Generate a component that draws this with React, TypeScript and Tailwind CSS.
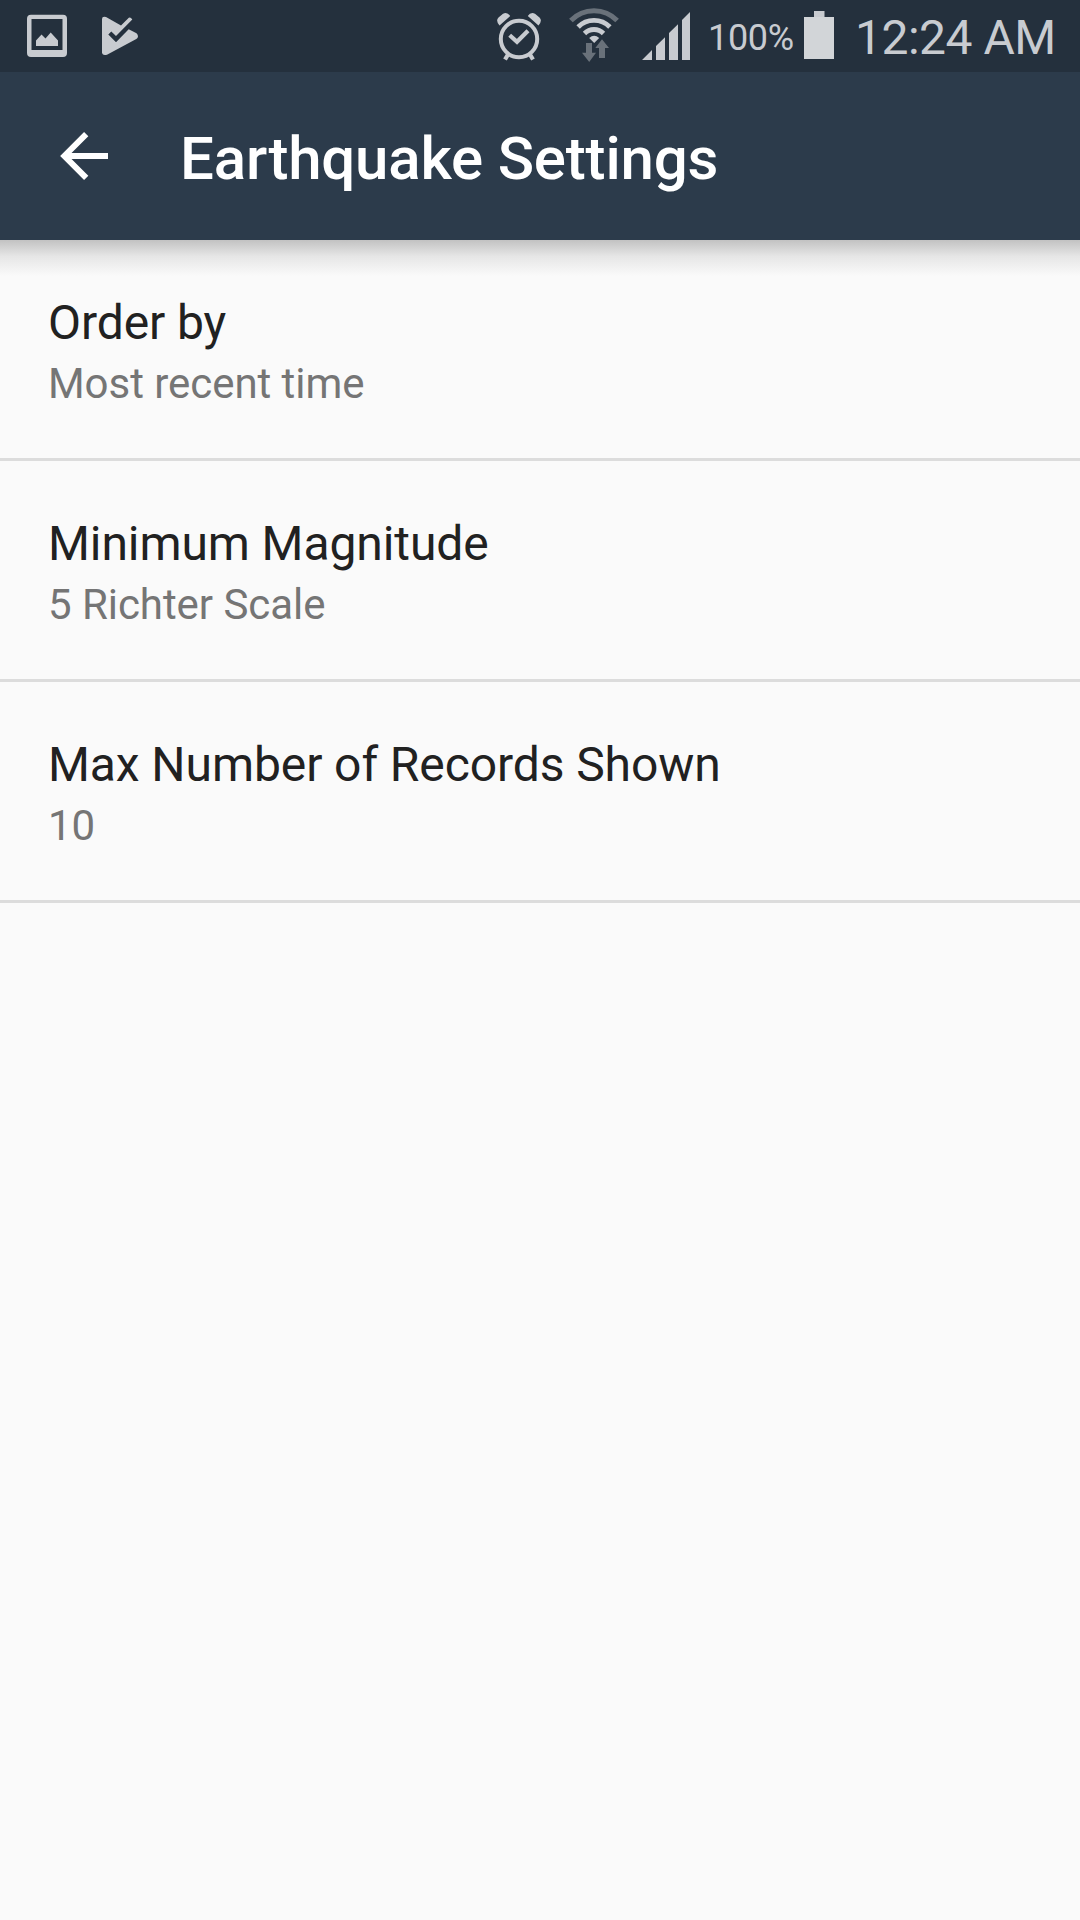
const settings = [
  { title: "Order by", summary: "Most recent time" },
  { title: "Minimum Magnitude", summary: "5 Richter Scale" },
  { title: "Max Number of Records Shown", summary: "10" },
];

function PictureIcon() {
  return (
    <svg className="ml-[27px] h-[72px] w-[40px] shrink-0" viewBox="27 0 40 72" fill="#c8cbd0">
      <path fillRule="evenodd" d="M31 14.7H63a4 4 0 0 1 4 4V53a4 4 0 0 1-4 4H31a4 4 0 0 1-4-4V18.700a4 4 0 0 1 4-4ZM31.500 19V50H62.500V19Z" />
      <path d="M36 46V40.500L41.500 34.500L45.500 38.500L50.700 32.500L58 40.500V46Z" />
    </svg>
  );
}

function PlayCheckIcon() {
  return (
    <svg className="ml-[35px] h-[72px] w-[36px] shrink-0" viewBox="102 0 36 72" fill="#c8cbd0">
      <path d="M102 19Q102 16 106 17L121 25.600L128.800 17.800Q130 16.900 131 18L132.300 19.600L116 36L111.300 31.500L108.300 34.400L116 42.300L128.700 29.300L136.500 33.300Q138 34.500 138 36.500Q137.800 38 136.300 39L107 54.700Q102.800 56 102 53Z" />
    </svg>
  );
}

function AlarmIcon() {
  return (
    <svg className="h-[72px] w-[46px] shrink-0" viewBox="496 0 46 72" fill="none" stroke="#c8cbd0">
      <circle cx="519" cy="39" r="18.200" strokeWidth="4" />
      <path d="M509.700 35.200L517 41.800L528 30.800" strokeWidth="4.200" />
      <path d="M508.300 54L505 59.500M529.700 54L533 59.500" strokeWidth="4.200" />
      <path d="M499.500 25.500Q495.300 20.500 498.500 17.500L503 13.700Q507.500 11.800 510.200 16ZM538.500 25.500Q542.700 20.500 539.500 17.500L535 13.700Q530.500 11.800 527.800 16Z" fill="#c8cbd0" stroke="none" />
    </svg>
  );
}

function WifiIcon() {
  return (
    <svg className="ml-[27px] h-[72px] w-[50px] shrink-0" viewBox="569 0 50 72" fill="none">
      <path d="M570.900 20.600A32 32 0 0 1 617.100 20.600" stroke="#69717a" strokeWidth="5" />
      <path d="M578.100 27A22.200 22.200 0 0 1 609.900 27" stroke="#c8cbd0" strokeWidth="4.800" />
      <path d="M584.500 33.500A13.300 13.300 0 0 1 603.500 33.500" stroke="#c8cbd0" strokeWidth="4.800" />
      <path d="M594.200 43L589.200 38Q594.200 33.500 599.200 38Z" fill="#c8cbd0" />
      <path d="M586 43H592V52.700H596L589.200 62L582 52.700H586ZM602 39.300L609 48H605V58H599V48H595.300Z" fill="#69717a" />
    </svg>
  );
}

function SignalIcon() {
  return (
    <svg className="ml-[23px] h-[72px] w-[48px] shrink-0" viewBox="642 0 48 72" fill="#c8cbd0">
      <path d="M642 60L652 50V60ZM656 60V46L665 37.300V60ZM669 60V33L678 24.300V60ZM682 60V20L690 12V60Z" />
    </svg>
  );
}

function BatteryIcon() {
  return (
    <svg className="h-[72px] w-[30px] shrink-0" viewBox="804 0 30 72">
      <path d="M814 11H824.500V17H814Z" fill="#c8cbd0" />
      <path d="M804 17H834V59H804Z" fill="#d2d5d8" />
    </svg>
  );
}

function StatusBar() {
  return (
    <div className="flex h-[72px] items-start bg-[#24303d] text-[#c8cbd0]">
      <PictureIcon />
      <PlayCheckIcon />
      <div className="ml-auto flex">
        <AlarmIcon />
        <WifiIcon />
        <SignalIcon />
        <span className="w-[114px] pt-[17px] pl-[18px] text-[36px] leading-[42px] tracking-[-0.3px] whitespace-nowrap">100%</span>
        <BatteryIcon />
        <span className="w-[246px] pt-[10px] pl-[21px] text-[48px] leading-[56px] tracking-[-0.5px] whitespace-nowrap">12:24 AM</span>
      </div>
    </div>
  );
}

export default function App() {
  return (
    <div className="h-[1920px] w-[1080px] overflow-hidden bg-[#fafafa] font-['Roboto',sans-serif]">
      <StatusBar />
      <header className="flex h-[168px] bg-[#2c3b4b] text-white">
        <svg className="mt-[60px] ml-[60px] h-12 w-12" viewBox="0 0 48 48" fill="none" stroke="currentColor" strokeWidth="6">
          <path d="M48 24H8M26.200 2.200L4.400 24L26.200 45.800" />
        </svg>
        <h1 className="mt-[52px] ml-[72px] text-[60px] leading-[70px] font-medium tracking-[-0.18px] whitespace-nowrap">Earthquake Settings</h1>
      </header>
      <main className="relative">
        <div className="pointer-events-none absolute inset-x-0 top-0 h-[36px] bg-linear-to-b from-[#c2c2c2] via-[#e6e6e6] via-45% to-[#fafafa]" />
        {settings.map(({ title, summary }) => (
          <section key={title} className="h-[221px] border-b-[3px] border-[#dcdcdc] px-12 pt-[55px]">
            <h2 className="text-[48px] leading-[56px] tracking-[-0.09px] text-[#212121]">{title}</h2>
            <p className="mt-[8px] text-[42px] leading-[49px] tracking-[-0.05px] text-[#757575]">{summary}</p>
          </section>
        ))}
      </main>
    </div>
  );
}
